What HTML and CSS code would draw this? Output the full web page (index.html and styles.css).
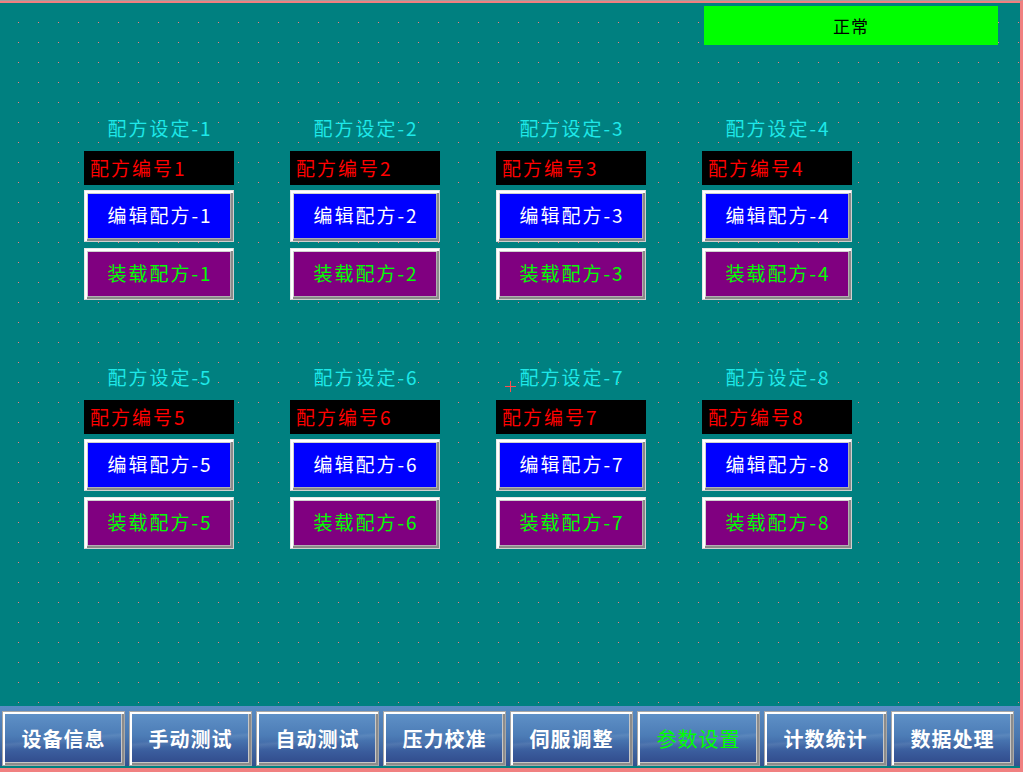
FILE: index.html
```html
<!DOCTYPE html>
<html lang="zh">
<head>
<meta charset="utf-8">
<title>配方设定</title>
<link rel="stylesheet" href="styles.css">
</head>
<body>
<div class="screen">
  <main class="main">
    <div class="status-row"><div class="status">正常</div></div>
    <div class="grid">
      <section class="card"><div class="title">配方设定-1</div><div class="label">配方编号1</div><div class="btn edit">编辑配方-1</div><div class="btn load">装载配方-1</div></section>
      <section class="card"><div class="title">配方设定-2</div><div class="label">配方编号2</div><div class="btn edit">编辑配方-2</div><div class="btn load">装载配方-2</div></section>
      <section class="card"><div class="title">配方设定-3</div><div class="label">配方编号3</div><div class="btn edit">编辑配方-3</div><div class="btn load">装载配方-3</div></section>
      <section class="card"><div class="title">配方设定-4</div><div class="label">配方编号4</div><div class="btn edit">编辑配方-4</div><div class="btn load">装载配方-4</div></section>
      <section class="card"><div class="title">配方设定-5</div><div class="label">配方编号5</div><div class="btn edit">编辑配方-5</div><div class="btn load">装载配方-5</div></section>
      <section class="card"><div class="title">配方设定-6</div><div class="label">配方编号6</div><div class="btn edit">编辑配方-6</div><div class="btn load">装载配方-6</div></section>
      <section class="card"><div class="title">配方设定-7</div><div class="label">配方编号7</div><div class="btn edit">编辑配方-7</div><div class="btn load">装载配方-7</div></section>
      <section class="card"><div class="title">配方设定-8</div><div class="label">配方编号8</div><div class="btn edit">编辑配方-8</div><div class="btn load">装载配方-8</div></section>
    </div>
    <div class="cross"></div>
  </main>
  <nav class="bar">
    <div class="nav-btn">设备信息</div>
    <div class="nav-btn">手动测试</div>
    <div class="nav-btn">自动测试</div>
    <div class="nav-btn">压力校准</div>
    <div class="nav-btn">伺服调整</div>
    <div class="nav-btn active">参数设置</div>
    <div class="nav-btn">计数统计</div>
    <div class="nav-btn">数据处理</div>
  </nav>
</div>
</body>
</html>
```

FILE: styles.css
```css
html, body {
  margin: 0;
  padding: 0;
  background: #008080;
}
body {
  width: 1023px;
  height: 772px;
  overflow: hidden;
  font-family: "Noto Sans CJK SC", "DejaVu Sans", sans-serif;
}
.screen {
  width: 1020px;
  height: 765px;
  border-top: 1px solid #a0a0a0;
  box-shadow: inset 0 2px 0 #f08080;
  border-right: 3px solid #f08080;
  border-bottom: 4px solid #f08080;
  background-color: #008080;
  display: flex;
  flex-direction: column;
  padding-top: 2px;
  box-sizing: content-box;
}
.main {
  position: relative;
  height: 703px;
  background-image: conic-gradient(at 1px 1px, transparent 75%, #f08080 0);
  background-size: 20px 20px;
  background-position: 18px 19px;
  background-repeat: repeat;
}
.status-row {
  display: flex;
  justify-content: flex-end;
  padding: 3px 22px 0 0;
}
.status {
  width: 294px;
  height: 39px;
  background: #00ff00;
  color: #000;
  font-size: 17px;
  line-height: 39px;
  text-align: center;
  letter-spacing: 1px;
}
.grid {
  display: grid;
  grid-template-columns: repeat(4, 150px);
  column-gap: 56px;
  row-gap: 66px;
  padding: 72px 0 0 84px;
}
.card {
  display: flex;
  flex-direction: column;
}
.title {
  height: 22px;
  line-height: 22px;
  margin-bottom: 12px;
  text-align: center;
  color: #1ee8e8;
  font-size: 19px;
  letter-spacing: 2px;
  padding-left: 2px;
}
.label {
  height: 34px;
  line-height: 34px;
  background: #000;
  color: #ff0000;
  font-size: 19px;
  letter-spacing: 2px;
  padding-left: 6px;
  margin-bottom: 5px;
}
.btn {
  box-sizing: border-box;
  height: 52px;
  line-height: 47px;
  text-align: center;
  font-size: 19px;
  letter-spacing: 2px;
  padding-left: 2px;
  border: 1px solid #d0d0d0;
  border-top-color: #e8e8e8;
  border-left-color: #e8e8e8;
  box-shadow: inset 2px 2px 0 #ffffff, inset -2px -2px 0 #8a8a8a, inset 3px 3px 0 #d0d0d0, inset -3px -3px 0 #b0b0b0;
}
.edit {
  background: #0000ff;
  color: #ffffff;
  margin-bottom: 6px;
}
.load {
  background: #800080;
  color: #00ff00;
}
.cross {
  position: absolute;
  left: 505px;
  top: 378px;
  width: 11px;
  height: 11px;
  background:
    linear-gradient(#ff5050, #ff5050) 5px 0 / 1px 11px no-repeat,
    linear-gradient(#ff5050, #ff5050) 0 5px / 11px 1px no-repeat;
}
.bar {
  height: 60px;
  margin-bottom: 2px;
  background: linear-gradient(#5a8cc4, #4a78b0 50%, #33528f);
  display: flex;
  gap: 4px;
  padding: 5px 0 0 2px;
  box-sizing: border-box;
}
.nav-btn {
  box-sizing: border-box;
  width: 123px;
  height: 55px;
  line-height: 53px;
  text-align: center;
  color: #ffffff;
  font-size: 20px;
  font-weight: bold;
  letter-spacing: 1px;
  background:
    linear-gradient(175deg, transparent 48%, rgba(255,255,255,0.08) 52%, transparent 60%),
    linear-gradient(#6092c8, #4c7cb6 45%, #3a5c9c 75%, #30498a);
  border: 1px solid #a8a8a8;
  box-shadow: inset 2px 2px 0 #ffffff, inset -2px -2px 0 #8c8c8c, inset -3px -3px 0 #c8c8c8;
}
.nav-btn.active {
  color: #00ff00;
  font-weight: normal;
}
```
